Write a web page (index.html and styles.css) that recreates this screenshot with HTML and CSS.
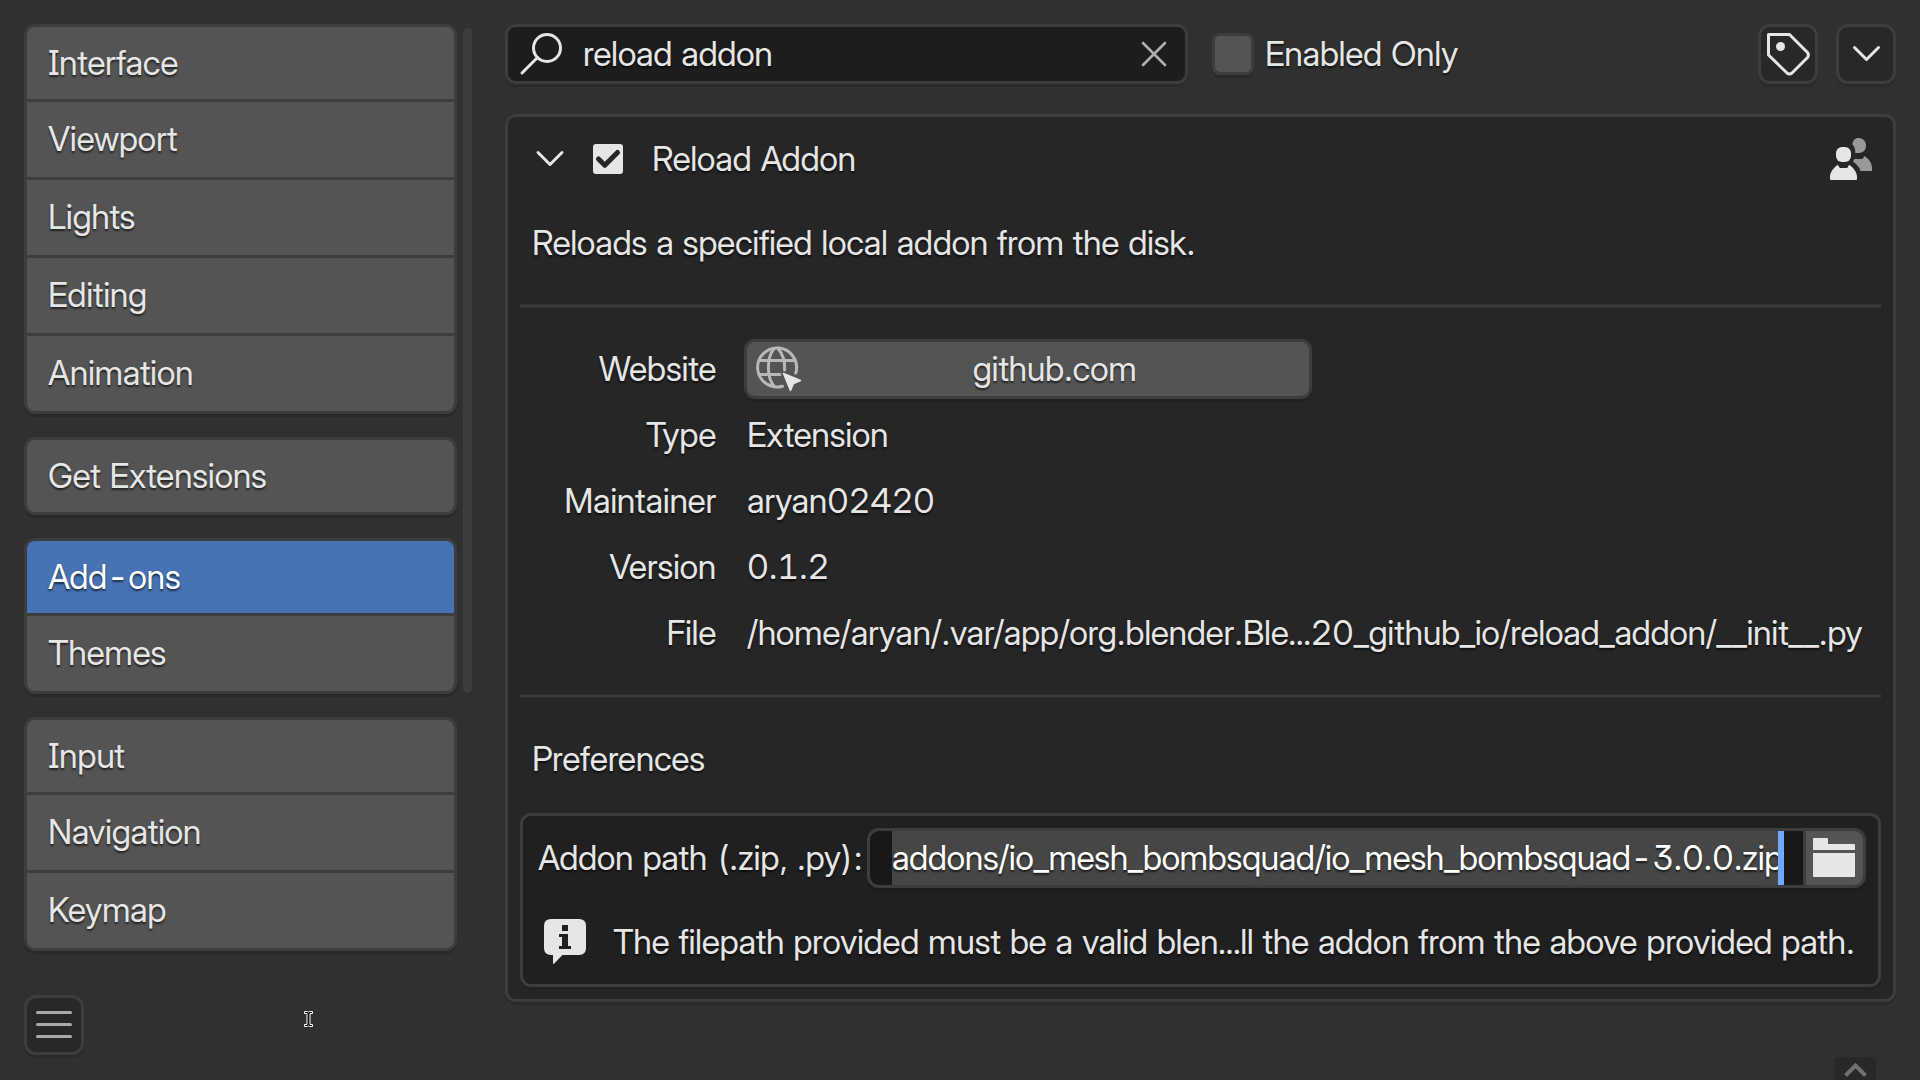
FILE: index.html
```html
<!DOCTYPE html>
<html lang="en">
<head>
<meta charset="utf-8">
<title>Preferences</title>
<link rel="stylesheet" href="styles.css">
</head>
<body>
<aside class="sidebar">
  <div class="nav-wrap">
    <nav class="nav">
      <div class="group"><a>Interface</a><a>Viewport</a><a>Lights</a><a>Editing</a><a>Animation</a></div>
      <div class="group"><a>Get Extensions</a></div>
      <div class="group"><a class="active">Add-ons</a><a>Themes</a></div>
      <div class="group"><a>Input</a><a>Navigation</a><a>Keymap</a></div>
    </nav>
    <div class="scrollbar"></div>
  </div>
  <button class="icon-btn menu-btn" aria-label="Menu">
    <svg width="54" height="54" viewBox="0 0 54 54" fill="none" stroke="#aaa" stroke-width="3" stroke-linecap="round"><path d="M10.500 14.500H43.500M10.500 26.500H43.500M10.500 38.500H43.500"/></svg>
  </button>
</aside>

<main class="main">
  <div class="toolbar">
    <div class="search">
      <svg width="54" height="54" viewBox="0 0 54 54" fill="none" stroke="#e6e6e6" stroke-width="3" stroke-linecap="round"><circle cx="38" cy="21" r="13.500"/><path d="M28.500 30.500L13 46"/></svg>
      <span class="query">reload addon</span>
      <svg class="clear" width="26" height="26" viewBox="0 0 26 26" fill="none" stroke="#b0b0b0" stroke-width="2.600" stroke-linecap="round"><path d="M2 2L24 24M24 2L2 24"/></svg>
    </div>
    <div class="check"></div>
    <span>Enabled Only</span>
    <button class="icon-btn tag-btn" aria-label="Tags">
      <svg width="54" height="54" viewBox="0 0 54 54"><path d="M7.500 7.500H28.500L46.500 25.500Q48.300 28 46.500 30.500L31 46Q28.500 48 26 46L7.500 28Z" fill="none" stroke="#e6e6e6" stroke-width="3" stroke-linejoin="round"/><circle cx="19.500" cy="19.500" r="4.500" fill="#e6e6e6"/></svg>
    </button>
    <button class="icon-btn" aria-label="More">
      <svg width="54" height="54" viewBox="0 0 54 54" fill="none" stroke="#e6e6e6" stroke-width="3" stroke-linecap="round" stroke-linejoin="round"><path d="M15.500 20.500L27.500 32.500L39.500 20.500"/></svg>
    </button>
  </div>

  <section class="panel">
    <header class="panel-head">
      <svg width="30" height="30" viewBox="0 0 30 30" fill="none" stroke="#e6e6e6" stroke-width="3" stroke-linecap="round" stroke-linejoin="round"><path d="M3 8.500L15 20.500L27 8.500"/></svg>
      <svg width="30" height="30" viewBox="0 0 30 30"><rect width="30" height="30" rx="3" fill="#e6e6e6"/><path d="M5.500 15L11.800 21.300L24.500 8.500" fill="none" stroke="#262626" stroke-width="5" stroke-linecap="round" stroke-linejoin="round"/></svg>
      <h2>Reload Addon</h2>
      <svg class="people" width="42" height="42" viewBox="0 0 42 42">
        <path fill="#999" d="M22.500 6.500C22.500 2.500 25 0 28.700 0S36 2.800 36 7.500S33 15 28.700 15L25.200 15C25.500 11.500 24.500 8.500 22.500 6.500Z"/>
        <path fill="#999" d="M24.500 21H32.500L34.500 18C39 21 42 25 42 30V33H30.500C29.500 29 27 26.500 23 23.500Z"/>
        <rect x="6" y="9" width="15" height="15" rx="6" fill="#e6e6e6"/>
        <path fill="#e6e6e6" d="M7.800 26.800L9.800 30H17.200L19.200 26.800C23.500 30 27 34 27 39V41Q27 42 26 42H1Q0 42 0 41V39C0 34 3.500 30 7.800 26.800Z"/>
      </svg>
    </header>
    <p class="desc">Reloads a specified local addon from the disk.</p>
    <hr>
    <dl class="fields">
      <dt>Website</dt>
      <dd class="link-btn">
        <svg width="50" height="54" viewBox="0 0 50 54"><g fill="none" stroke="#b8b8b8" stroke-width="3" stroke-linecap="round"><path d="M30.500 44.200A19.500 19.500 0 1 1 43.800 31"/><path d="M7.500 18.500H42.500M7.500 32.500H28"/><path d="M22 6.500C14.500 16 14.500 35 22 44M26 6.500C31.500 13 33.200 20 32.600 28"/></g><path d="M31.500 31.500L48.500 38.500L41.500 41.500L38.500 48.500Z" fill="#e6e6e6" stroke="#e6e6e6" stroke-width="1.500" stroke-linejoin="round"/></svg>
        <span>github.com</span>
      </dd>
      <dt>Type</dt><dd>Extension</dd>
      <dt>Maintainer</dt><dd>aryan02420</dd>
      <dt>Version</dt><dd>0.1.2</dd>
      <dt>File</dt><dd>/home/aryan/.var/app/org.blender.Ble…20_github_io/reload_addon/__init__.py</dd>
    </dl>
    <hr>
    <h3>Preferences</h3>
    <div class="prefs">
      <div class="path-row">
        <label>Addon path (.zip, .py):</label>
        <div class="path-input">
          <div class="path-text"><span class="selection">addons/io_mesh_bombsquad/io_mesh_bombsquad-3.0.0.zip</span><i class="caret"></i></div>
          <div class="browse">
            <svg width="42" height="40" viewBox="0 0 42 40" fill="#e6e6e6"><path d="M0 1Q0 0 1 0H14Q15 0 15 1V6H41Q42 6 42 7V12H0Z"/><path d="M0 15H42V38Q42 39 41 39H1Q0 39 0 38Z"/></svg>
          </div>
        </div>
      </div>
      <div class="info-row">
        <svg width="42" height="45" viewBox="0 0 42 45"><path fill="#e6e6e6" fill-rule="evenodd" d="M7 0H35Q42 0 42 7V29Q42 36 35 36H18.500L10 44.700Q9 45.400 9 44V36H7Q0 36 0 29V7Q0 0 7 0ZM18 6V12H24V6ZM15 15V18H18V27H15V30H27V27H24V15Z"/></svg>
        <span>The filepath provided must be a valid blen…ll the addon from the above provided path.</span>
      </div>
    </div>
  </section>
</main>

<div class="region-toggle"><svg width="41" height="23" viewBox="0 0 41 23" fill="none" stroke="#707070" stroke-width="4"><path d="M10.500 18.500L20.500 8.500L30.500 18.500"/></svg></div>
<svg class="cursor" width="9" height="16" viewBox="0 0 9 16"><path d="M0.500 0.500H3.500L4.500 1.200L5.500 0.500H8.500V2.500H6V13.500H8.500V15.500H5.500L4.500 14.800L3.500 15.500H0.500V13.500H3V2.500H0.500Z" fill="#111" stroke="#fff" stroke-width="1"/></svg>
</body>
</html>
```
FILE: styles.css
```css
* { box-sizing: border-box; }

body {
  margin: 0;
  width: 1920px;
  height: 1080px;
  overflow: hidden;
  position: relative;
  display: flex;
  background: #303030;
  color: #e6e6e6;
  font: 400 34px/60px "Inter Display", Inter, sans-serif;
  font-feature-settings: "tnum", "cv08", "cv09", "liga", "calt";
  letter-spacing: -.4px;
  word-spacing: .4px;
  text-shadow: 0 2px 2px rgba(0, 0, 0, .6);
  white-space: nowrap;
}

h2, h3, p, dl, dd, hr { margin: 0; font-size: inherit; font-weight: inherit; }
svg { display: block; flex: none; }

/* Sidebar */
.sidebar { width: 505px; padding: 24px 0 0 24px; flex: none; }
.nav-wrap { display: flex; gap: 6px; }
.nav { width: 433px; display: flex; flex-direction: column; gap: 23px; }
.group {
  display: flex;
  flex-direction: column;
  gap: 3px;
  border: 3px solid #3d3d3d;
  border-radius: 11px;
  background: #3d3d3d;
  box-shadow: 0 3px 0 #292929;
}
.group a {
  height: 75px;
  line-height: 73px;
  padding-left: 21px;
  background: #545454;
}
.group a:first-child { height: 72px; line-height: 72px; border-radius: 8px 8px 0 0; }
.group a:last-child { border-radius: 0 0 8px 8px; }
.group a:only-child { border-radius: 8px; }
.group a.active { background: #4772b3; color: #fff; }
.scrollbar { width: 9px; height: 665px; margin-top: 4px; border-radius: 5px; background: #3d3d3d; }

.icon-btn {
  width: 60px;
  height: 60px;
  padding: 0;
  border: 3px solid #3d3d3d;
  border-radius: 12px;
  background: #282828;
  box-shadow: 0 3px 0 #2a2a2a;
  flex: none;
}
.menu-btn { display: block; margin-top: 44px; }

/* Main column */
.main { width: 1391px; padding-top: 24px; display: flex; flex-direction: column; gap: 30px; }
.toolbar { display: flex; align-items: center; height: 60px; }
.search {
  width: 683px;
  height: 60px;
  display: flex;
  align-items: center;
  padding-left: 1px;
  line-height: 54px;
  border: 3px solid #3d3d3d;
  border-radius: 11px;
  background: #1d1d1d;
  box-shadow: 0 3px 0 #2a2a2a;
}
.query { margin-left: 20px; }
.clear { margin-left: auto; margin-right: 18px; }
.check {
  width: 42px;
  height: 42px;
  margin: 0 11px 0 24px;
  border: 3px solid #3d3d3d;
  border-radius: 8px;
  background: #545454;
  box-shadow: 0 3px 0 #2a2a2a;
}
.tag-btn { margin: 0 18px 0 auto; }

/* Add-on panel */
.panel {
  height: 888px;
  padding: 12px;
  border: 3px solid #3d3d3d;
  border-radius: 11px;
  background: #262626;
  box-shadow: 0 3px 0 #2a2a2a;
}
.panel-head { display: flex; align-items: center; height: 60px; padding: 0 9px 0 15px; }
.panel-head svg + svg { margin-left: 28px; }
.panel-head h2 { margin-left: 29px; }
.panel-head .people { margin-left: auto; }
.desc { height: 60px; margin: 24px 0 0 12px; }
hr { height: 4px; margin: 31px 0; border: solid #303030; border-width: 1px 0; background: #3b3b3b; }
.fields { display: grid; grid-template-columns: 196px 1fr; column-gap: 28px; row-gap: 6px; grid-auto-rows: 60px; }
.fields dt { text-align: right; }
.fields dd { padding-left: 3px; }
.fields .link-btn {
  width: 568px;
  display: flex;
  padding: 0;
  line-height: 54px;
  border: 3px solid #3d3d3d;
  border-radius: 11px;
  background: #545454;
  box-shadow: 0 3px 0 #222;
}
.link-btn svg { margin-left: 5px; }
.link-btn span { flex: 1; text-align: center; margin-left: -2px; }
h3 { height: 60px; padding-left: 12px; }
.prefs {
  height: 174px;
  margin-top: 24px;
  padding: 12px 13px;
  border: 3px solid #3d3d3d;
  border-radius: 11px;
  background: #202020;
  box-shadow: 0 3px 0 #222;
}
.path-row { display: flex; height: 60px; }
.path-row label { width: 331px; flex: none; padding-left: 2px; }
.path-input {
  width: 999px;
  display: flex;
  line-height: 54px;
  border: 3px solid #3d3d3d;
  border-radius: 12px;
  background: #3d3d3d;
  box-shadow: 0 3px 0 #1c1c1c;
}
.path-text {
  width: 933px;
  display: flex;
  padding-left: 22px;
  border-radius: 9px 0 0 9px;
  background: #181818;
  color: #fff;
  letter-spacing: -.52px;
}
.selection { width: 886px; background: #464646; }
.caret { width: 6px; background: #71a8ff; }
.browse { width: 57px; margin-left: 3px; padding: 7px; border-radius: 0 9px 9px 0; background: #545454; }
.info-row { display: flex; margin-top: 24px; padding-left: 8px; }
.info-row svg { margin-top: 7px; }
.info-row span { margin-left: 27px; }

/* Overlays */
.region-toggle { position: absolute; left: 1835px; top: 1057px; width: 41px; height: 23px; border-radius: 4px 4px 0 0; background: #282828; }
.cursor { position: absolute; left: 304px; top: 1011px; }
```
